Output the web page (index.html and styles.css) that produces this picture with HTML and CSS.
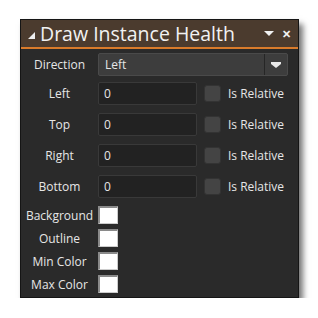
FILE: index.html
```html
<!DOCTYPE html>
<html>
<head>
    <title>Draw Instance Health</title>
    <meta charset="utf-8">
    <link rel="stylesheet" href="styles.css">
</head>
<body>
    <div class="panel">
        <div class="titlebar">
            <span class="collapse"></span>
            <span class="title">Draw Instance Health</span>
            <span class="menu"></span>
            <span class="close">&#x2715;</span>
        </div>
        <div class="form">
            <div class="row first">
                <label>Direction</label>
                <div class="select">
                    <span class="value">Left</span>
                    <span class="drop"><svg width="10" height="6" viewBox="0 0 10 6"><path d="M0 0H10V2L5 6L0 2Z" fill="#e8e8e8"/></svg></span>
                </div>
            </div>
            <div class="row">
                <label>Left</label>
                <div class="input">0</div>
                <span class="check"></span>
                <span class="check-label">Is Relative</span>
            </div>
            <div class="row">
                <label>Top</label>
                <div class="input">0</div>
                <span class="check"></span>
                <span class="check-label">Is Relative</span>
            </div>
            <div class="row">
                <label>Right</label>
                <div class="input">0</div>
                <span class="check"></span>
                <span class="check-label">Is Relative</span>
            </div>
            <div class="row">
                <label>Bottom</label>
                <div class="input">0</div>
                <span class="check"></span>
                <span class="check-label">Is Relative</span>
            </div>
            <div class="row color">
                <label>Background</label>
                <span class="swatch"></span>
            </div>
            <div class="row color">
                <label>Outline</label>
                <span class="swatch"></span>
            </div>
            <div class="row color">
                <label>Min Color</label>
                <span class="swatch"></span>
            </div>
            <div class="row color">
                <label>Max Color</label>
                <span class="swatch"></span>
            </div>
        </div>
    </div>
</body>
</html>
```

FILE: styles.css
```css
* { margin: 0; padding: 0; box-sizing: border-box; }
body { background: #fff; font-family: "Open Sans", sans-serif; color: #e6e6e6; }
.panel { margin: 19px 0 0 20px; width: 279px; height: 279px; background: #2a2a2a; border: 1px solid #151515; box-shadow: 4px 5px 6px rgba(0,0,0,0.55); }
.titlebar { height: 29px; background: #4b3b2e; border-bottom: 2px solid #d97b2b; display: flex; align-items: center; padding: 0 7px 0 7px; }
.collapse { width: 0; height: 0; border-left: 7px solid transparent; border-bottom: 7px solid #eee; margin: 4px 5px 0 0; }
.title { font-size: 19.5px; color: #f2f2f2; flex: 1; line-height: 26px; }
.menu { width: 0; height: 0; border-left: 5px solid transparent; border-right: 5px solid transparent; border-top: 5px solid #f2f2f2; margin-right: 8px; }
.close { font-size: 11px; font-weight: bold; color: #f2f2f2; }
.form { padding: 4px 10px 0 0; }
.row { display: flex; align-items: center; height: 23px; margin-bottom: 8px; font-size: 12px; }
.row.first { margin-bottom: 6px; }
.row label { width: 77px; text-align: center; flex: none; }
.select { flex: 1; height: 23px; background: #3d3d3d; border: 1px solid #4a4a4a; border-radius: 2px; display: flex; align-items: center; }
.select .value { flex: 1; padding-left: 6px; }
.drop { width: 23px; height: 21px; border-left: 1px solid #262626; display: flex; align-items: center; justify-content: center; }
.input { width: 99px; height: 23px; background: #222; border: 1px solid #393939; border-radius: 2px; padding-left: 5px; line-height: 21px; }
.check { width: 17px; height: 17px; background: #444; border: 1px solid #333; border-radius: 3px; margin: 0 7px 0 7px; }
.check-label { white-space: nowrap; }
.row.color { margin-bottom: 5px; height: 18px; }
.swatch { width: 20px; height: 18px; background: #fff; border: 1px solid #ccc; border-top: 2px solid #8a8a8a; border-left: 2px solid #8a8a8a; }
```
